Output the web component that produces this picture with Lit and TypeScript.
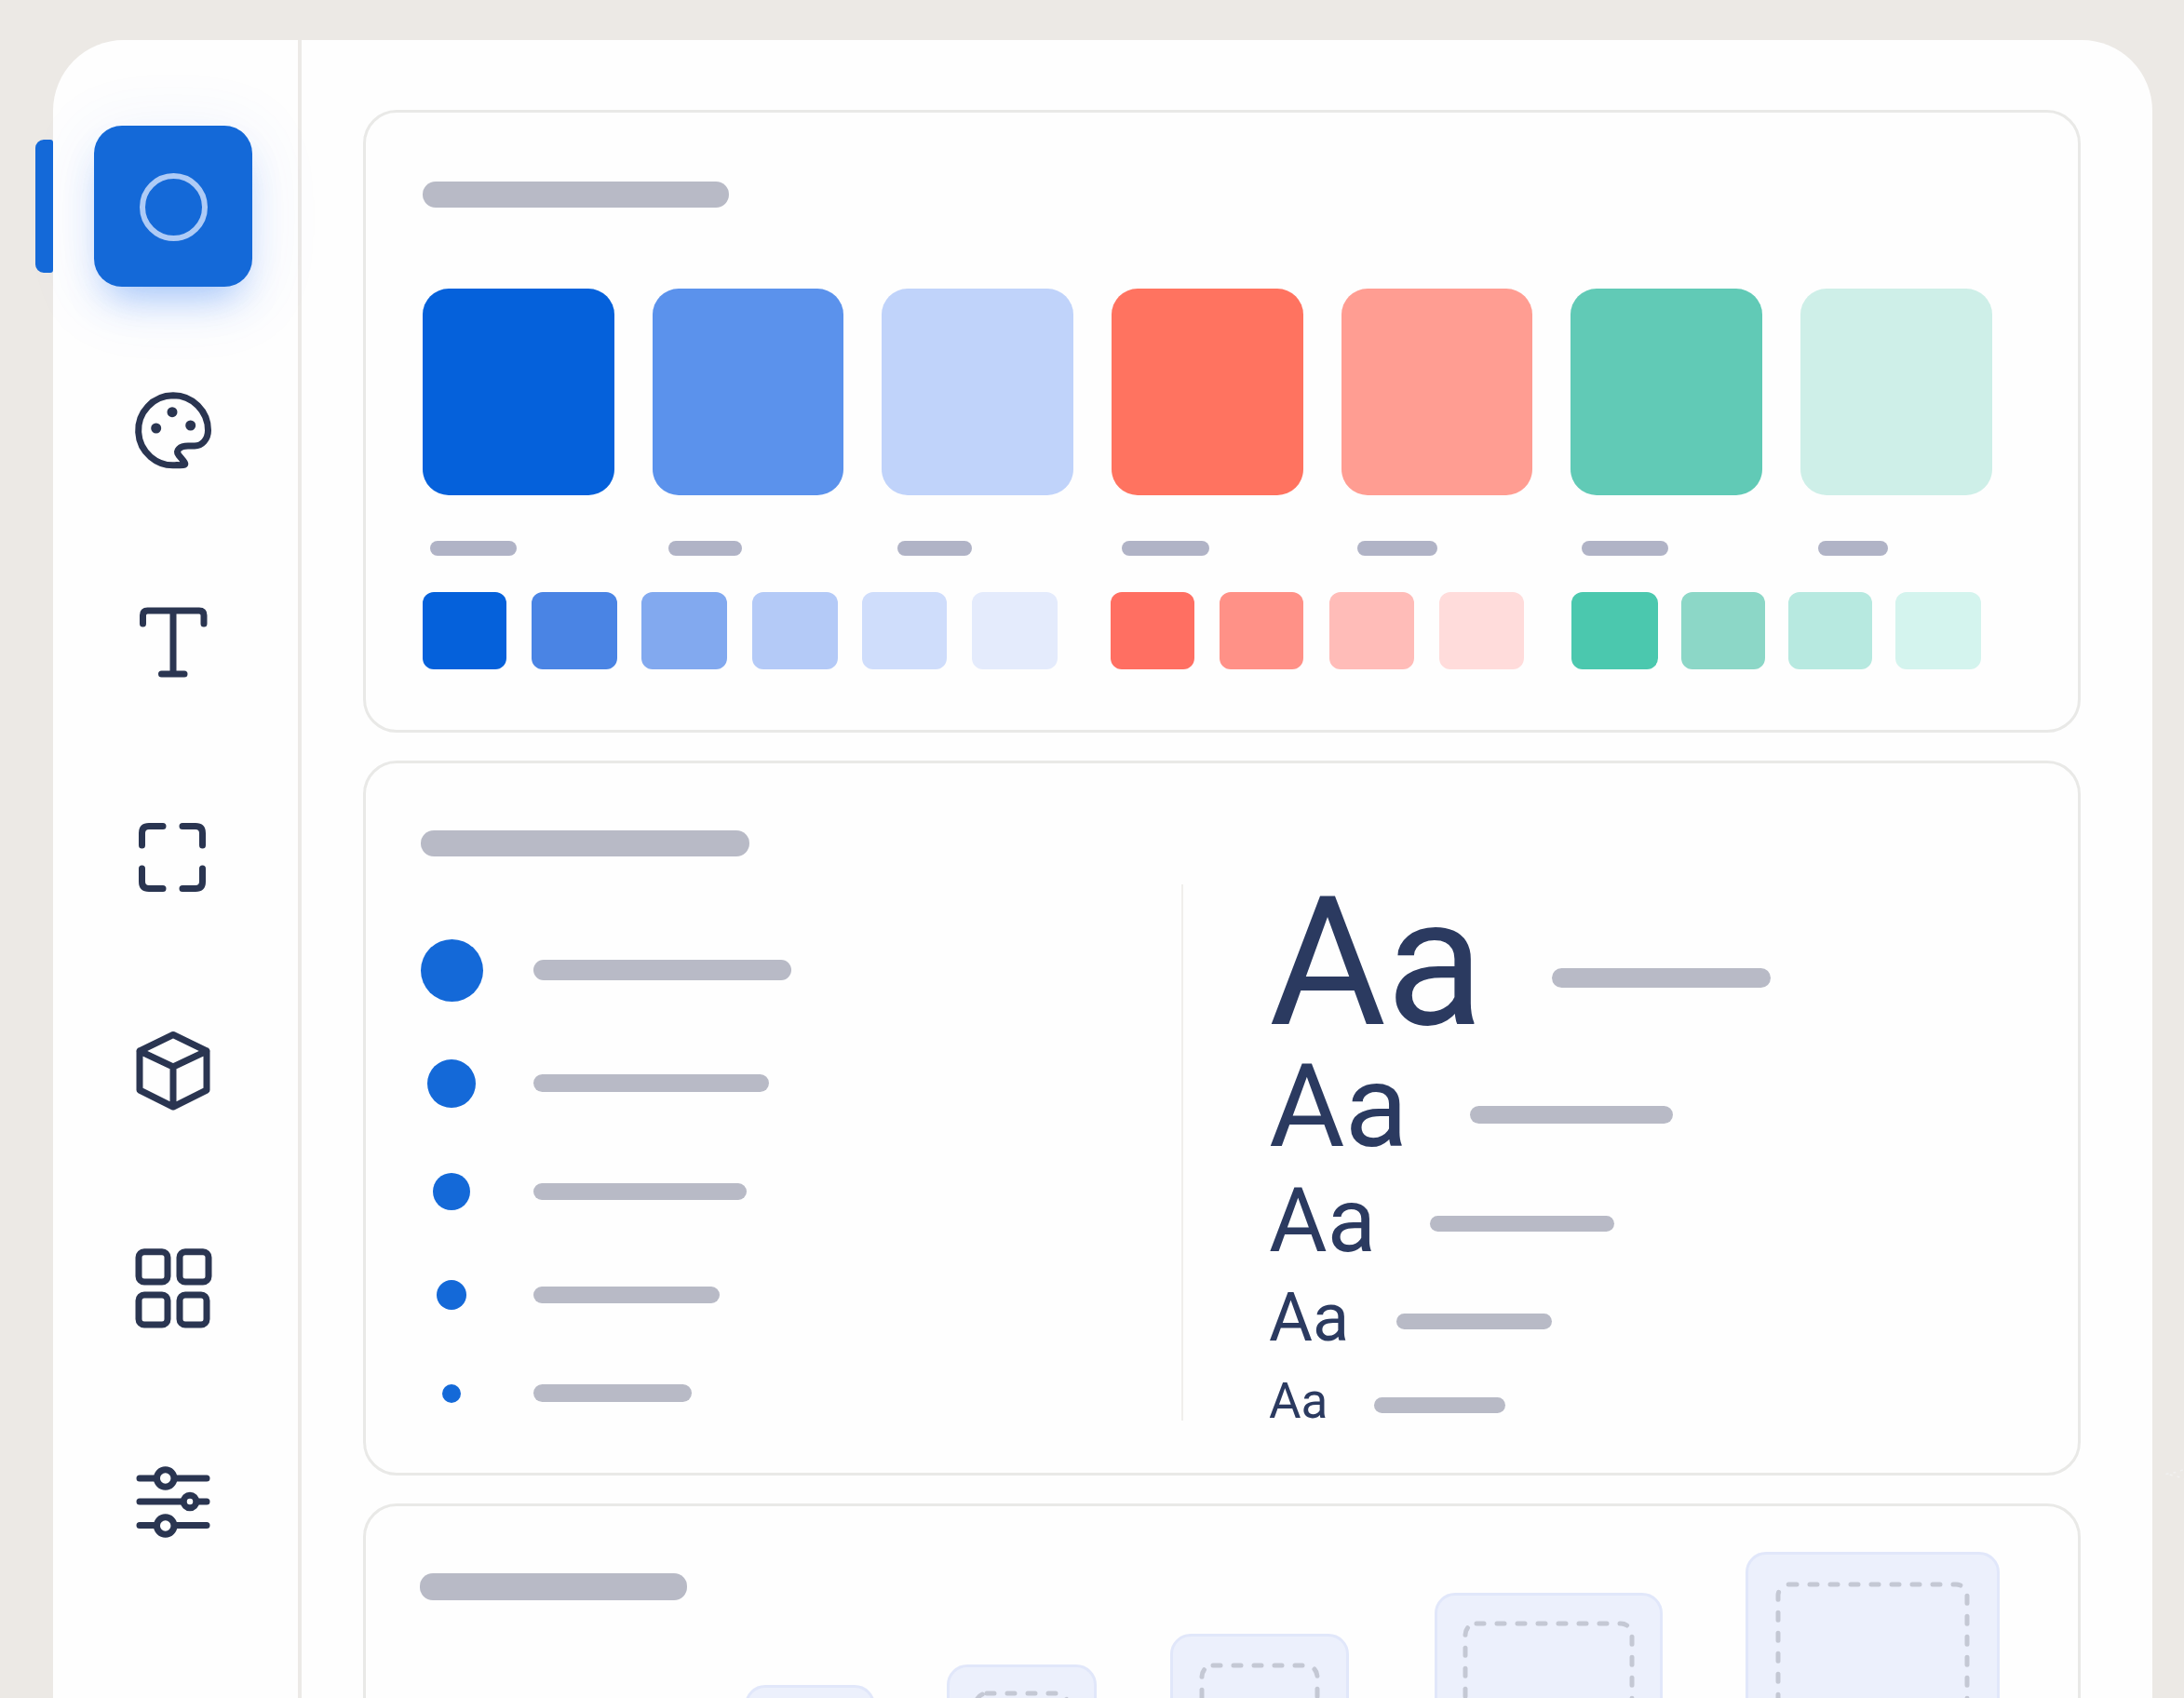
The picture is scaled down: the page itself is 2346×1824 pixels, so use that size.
import { LitElement, html, css, svg } from "lit";
import { customElement } from "lit/decorators.js";

const bigSwatches = [
  { c: "#0561db", lx: 8, lw: 93 },
  { c: "#5b92ec", lx: 17, lw: 79 },
  { c: "#c0d3fa", lx: 17, lw: 80 },
  { c: "#ff7360", lx: 11, lw: 94 },
  { c: "#ff9d92", lx: 17, lw: 86 },
  { c: "#61cab6", lx: 12, lw: 93 },
  { c: "#ceefe8", lx: 19, lw: 75 },
];

const smallGroups = [
  { gap: 26.6, after: 57, items: [["#0561db", 90], ["#4a84e4", 92], ["#82a9ef", 92], ["#b4caf7", 92], ["#cfddfb", 91], ["#e4ebfc", 92]] },
  { gap: 27.5, after: 50.5, items: [["#ff6f62", 90], ["#ff9187", 90], ["#ffbcb8", 91], ["#ffdcdb", 91]] },
  { gap: 25, after: 0, items: [["#4bc8ae", 93], ["#8cd7c7", 90], ["#b7e9e0", 90], ["#d4f4ee", 92]] },
] as const;

const dots = [
  { d: 67, rh: 122, w: 277, h: 22, pr: 54 },
  { d: 52, rh: 121, w: 253, h: 19, pr: 56 },
  { d: 40, rh: 112, w: 229, h: 18, pr: 56 },
  { d: 32, rh: 110, w: 200, h: 18, pr: 56 },
  { d: 20, rh: 101, w: 170, h: 19, pr: 56 },
];

const typeRows = [
  { fs: 193, rh: 168, tw: 304, bw: 235, bh: 21, my: 33 },
  { fs: 125, rh: 141.4, tw: 216, bw: 218, bh: 19, my: 17.6 },
  { fs: 96, rh: 104.6, tw: 173, bw: 198, bh: 17, my: 5.6 },
  { fs: 72, rh: 104.8, tw: 137, bw: 167, bh: 17, my: 6.2 },
  { fs: 53, rh: 72.2, tw: 113, bw: 141, bh: 17, my: 9.2 },
];

const boxes = [
  { w: 140, top: 192, ml: 62, inset: 30 },
  { w: 161, top: 170, ml: 77, inset: 28 },
  { w: 192, top: 137, ml: 79, inset: 31 },
  { w: 245, top: 93, ml: 92, inset: 30 },
  { w: 273, top: 49, ml: 89, inset: 32 },
];

const icons = [
  svg`<g transform="translate(4 3)">
      <path d="M56 19.8A37.5 37.5 0 0 1 93.5 57.3C93.5 67 87 74 79 74L72 74C63 74 58 79 62 84L67 90C71 95 68 95 60 94.6A37.5 37.5 0 1 1 56 19.8Z"/>
      <circle class="solid" cx="55" cy="37.7" r="5.5"/>
      <circle class="solid" cx="37.7" cy="55" r="5.5"/>
      <circle class="solid" cx="74.7" cy="52" r="5.5"/>
    </g>`,
  svg`<path d="M27.5 40V31Q27.5 26 32.5 26H88Q93 26 93 31V40M60 26V94M47.5 94H72"/>`,
  svg`<path d="M26.5 50V37Q26.5 29.5 34 29.5H49M70 29.5H84Q91.5 29.5 91.5 37V50M26.5 75V89Q26.5 96.5 34 96.5H49M70 96.5H84Q91.5 96.5 91.5 89V75"/>`,
  svg`<path d="M60 25.5L96 43V85L60 103L24 85V43ZM24 43L60 60L96 43M60 60V103"/>`,
  svg`<rect x="23" y="30.7" width="31" height="32.3" rx="6"/>
      <rect x="67" y="30.7" width="31" height="32.3" rx="6"/>
      <rect x="23" y="77" width="31" height="32" rx="6"/>
      <rect x="67" y="77" width="29" height="32" rx="6"/>`,
  svg`<path d="M24 46H96M24 71H96M24 96.5H96"/>
      <circle class="knob" cx="51.7" cy="46" r="9.25"/>
      <circle class="knob" cx="78" cy="71" r="6.75"/>
      <circle class="knob" cx="51.7" cy="97" r="9.25"/>`,
];

@customElement("app-root")
export class AppRoot extends LitElement {
  static styles = css`
    :host {
      display: block;
      height: 1824px;
      overflow: hidden;
      background: #ece9e5;
      font-family: Roboto, "Liberation Sans", sans-serif;
      padding: 43px 0 0 57px;
      box-sizing: border-box;
    }
    * { box-sizing: border-box; }
    .frame {
      width: 2255px;
      height: 1900px;
      background: #fefefe;
      border-radius: 76px 76px 0 0;
      display: flex;
      position: relative;
    }
    .indicator {
      position: absolute;
      left: -19px;
      top: 107px;
      width: 19px;
      height: 143px;
      background: #1469d8;
      border-radius: 9px 3px 3px 9px;
    }
    .side {
      width: 267px;
      flex: none;
      border-right: 4px solid #eceae7;
      padding: 92px 0 0 44px;
      display: flex;
      flex-direction: column;
    }
    .tile {
      width: 170px;
      height: 173px;
      flex: none;
      margin-bottom: 94px;
      border-radius: 30px;
      background: #1469d8;
      box-shadow: 0 24px 40px -14px rgba(45, 125, 245, 0.42), 0 12px 70px 10px rgba(60, 120, 240, 0.08);
      display: flex;
      align-items: center;
      justify-content: center;
    }
    .ring {
      width: 73px;
      height: 73px;
      margin-top: 2px;
      border-radius: 50%;
      border: 6.5px solid #aecbf6;
    }
    .slots {
      display: flex;
      flex-direction: column;
      gap: 108px;
      margin-left: 25px;
    }
    .icon {
      display: block;
      width: 120px;
      height: 120px;
      fill: none;
      stroke: #2a3551;
      stroke-width: 7;
      stroke-linecap: round;
      stroke-linejoin: round;
    }
    .icon .solid { fill: #2a3551; stroke: none; }
    .icon .knob { fill: #fefefe; }
    .main {
      flex: 1;
      padding: 75px 0 0 66px;
      display: flex;
      flex-direction: column;
      gap: 30px;
      position: relative;
    }
    .card {
      width: 1845px;
      flex: none;
      border: 3px solid #e9e9e7;
      border-radius: 36px;
    }
    .bar { background: #b8bac6; border-radius: 12px; flex: none; }
    .card1 { height: 669px; padding: 74px 0 0 61px; }
    .t1 { width: 329px; height: 28px; border-radius: 14px; margin-bottom: 87px; }
    .bigrow { display: flex; gap: 41.2px; }
    .bigcol { width: 205.5px; flex: none; }
    .big { height: 222px; border-radius: 28px; margin-bottom: 49px; }
    .lab { height: 16px; border-radius: 8px; background: #b0b3c6; }
    .smallrow { display: flex; margin-top: 39px; }
    .group { display: flex; }
    .small { height: 83px; border-radius: 12px; flex: none; }
    .card2 { height: 768px; padding: 72px 0 0 59px; }
    .t2 { width: 353px; height: 28px; border-radius: 14px; margin-bottom: 30px; }
    .body { display: flex; height: 576px; }
    .left { width: 817px; flex: none; padding-top: 31px; }
    .drow { display: flex; align-items: center; }
    .dcell { width: 121px; flex: none; display: flex; justify-content: center; }
    .dot { border-radius: 50%; background: #1469d8; }
    .vline { width: 2px; flex: none; background: #f0efec; }
    .right { margin-left: 92px; }
    .trow { display: flex; align-items: center; flex: none; }
    .aa {
      flex: none;
      color: #2b3a60;
      font-weight: 400;
      white-space: nowrap;
    }
    .card3 { height: 400px; display: flex; align-items: flex-start; padding-left: 58px; }
    .t3 { width: 287px; height: 29px; border-radius: 14px; margin-top: 72px; }
    .box {
      flex: none;
      height: 330px;
      background: #ecf0fc;
      border: 3px solid #e1e7fa;
      border-radius: 22px;
    }
    .dash { display: block; fill: none; stroke: #c4c8d4; stroke-width: 5; stroke-linecap: round; stroke-dasharray: 8 14; }
    .star {
      position: absolute;
      left: 2002px;
      top: 1492px;
      width: 95px;
      height: 97px;
      fill: none;
      stroke: #f1f1f0;
      stroke-width: 1.5;
      stroke-dasharray: 3 5;
    }
  `;

  render() {
    return html`
      <div class="frame">
        <div class="indicator"></div>
        <nav class="side">
          <div class="tile"><div class="ring"></div></div>
          <div class="slots">
            ${icons.map((i) => html`<svg class="icon" viewBox="0 0 120 120">${i}</svg>`)}
          </div>
        </nav>
        <main class="main">
          <section class="card card1">
            <div class="bar t1"></div>
            <div class="bigrow">
              ${bigSwatches.map(
                (s) => html`<div class="bigcol">
                  <div class="big" style="background:${s.c}"></div>
                  <div class="lab" style="margin-left:${s.lx}px;width:${s.lw}px"></div>
                </div>`
              )}
            </div>
            <div class="smallrow">
              ${smallGroups.map(
                (g) => html`<div class="group" style="gap:${g.gap}px;margin-right:${g.after}px">
                  ${g.items.map((i) => html`<div class="small" style="background:${i[0]};width:${i[1]}px"></div>`)}
                </div>`
              )}
            </div>
          </section>
          <section class="card card2">
            <div class="bar t2"></div>
            <div class="body">
              <div class="left">
                ${dots.map(
                  (d) => html`<div class="drow" style="height:${d.rh}px">
                    <div class="dcell" style="padding-right:${d.pr}px"><div class="dot" style="flex:none;width:${d.d}px;height:${d.d}px"></div></div>
                    <div class="bar" style="width:${d.w}px;height:${d.h}px"></div>
                  </div>`
                )}
              </div>
              <div class="vline"></div>
              <div class="right">
                ${typeRows.map(
                  (r) => html`<div class="trow" style="height:${r.rh}px">
                    <div class="aa" style="font-size:${r.fs}px;line-height:${r.rh}px;width:${r.tw}px">Aa</div>
                    <div class="bar" style="width:${r.bw}px;height:${r.bh}px;margin-top:${r.my}px"></div>
                  </div>`
                )}
              </div>
            </div>
          </section>
          <section class="card card3">
            <div class="bar t3"></div>
            ${boxes.map((b) => {
              const w = b.w - 2 * b.inset;
              return html`<div class="box" style="width:${b.w}px;margin-top:${b.top}px;margin-left:${b.ml}px;padding:${b.inset - 3}px 0 0 ${b.inset - 3}px">
                <svg class="dash" width="${w}" height="280" viewBox="0 0 ${w} 280">
                  <rect x="3" y="3" width="${w - 6}" height="270" rx="12"></rect>
                </svg>
              </div>`;
            })}
          </section>
          <svg class="star" viewBox="0 0 95 97">
            <path d="M47.5 0C52 30 65 45 95 48.5C65 52 52 67 47.5 97C43 67 30 52 0 48.5C30 45 43 30 47.5 0Z"></path>
          </svg>
        </main>
      </div>
    `;
  }
}
